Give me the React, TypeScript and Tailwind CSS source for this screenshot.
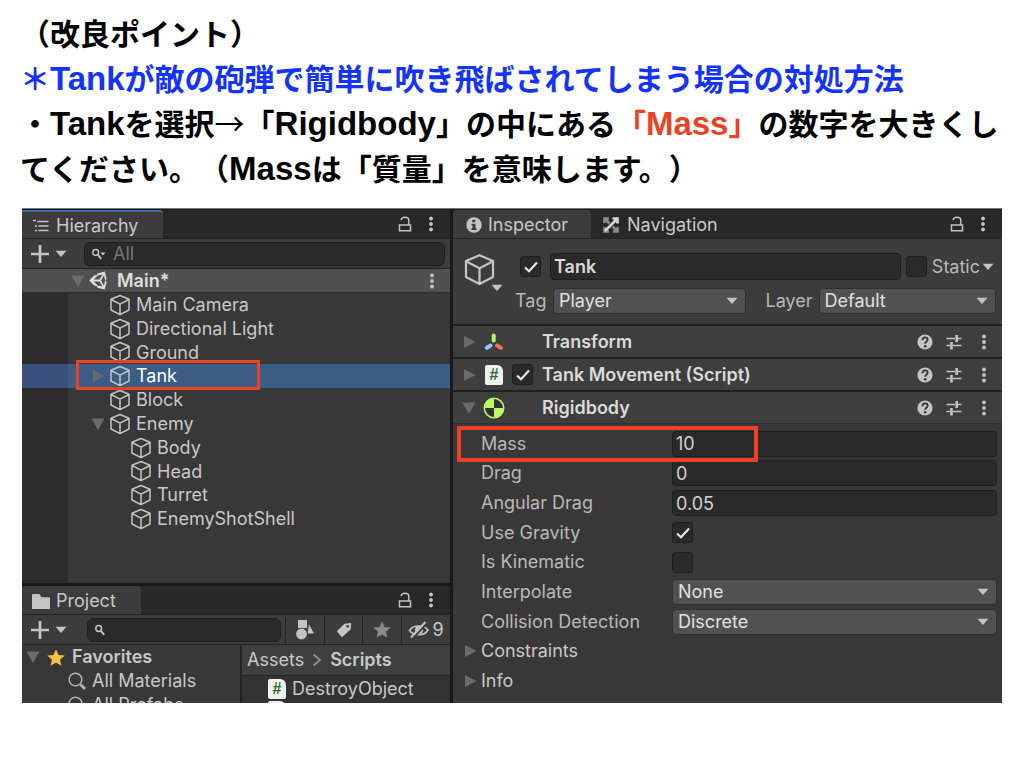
import React from "react";

type Dir = "right" | "down";

function Triangle({ dir }: { dir: Dir }) {
  return (
    <svg viewBox="0 0 14 14" className="size-3.5 shrink-0 fill-[#6b6b6b]" aria-hidden="true">
      <path d={dir === "down" ? "M0.5 1.5h13L7 13z" : "M2 1l11.500 6L2 13z"} />
    </svg>
  );
}

function Caret({ className = "" }: { className?: string }) {
  return (
    <svg viewBox="0 0 12 8" className={"h-2 w-3 shrink-0 fill-[#c4c4c4] " + className} aria-hidden="true">
      <path d="M0.500 0.800h11L6 7z" />
    </svg>
  );
}

function Cube({ className }: { className: string }) {
  return (
    <svg viewBox="0 0 22 22" className={"shrink-0 fill-none stroke-[#c4c4c4] " + className} strokeWidth="1.500" strokeLinejoin="round" aria-hidden="true">
      <path d="M11 1.500L20 5.300V16L11 20.700L2 16V5.300zM2 5.500L11 10.200L20 5.500M11 10.200V20.500" />
    </svg>
  );
}

function UnityLogo() {
  return (
    <svg viewBox="0 0 24 24" className="size-[19px] shrink-0 fill-[#dedede]" aria-hidden="true">
      <path
        fillRule="evenodd"
        d="M22.200 9.400L19.800 0.600L10.800 3L9.500 5.300H6.800L0.300 12L6.800 18.700H9.500L10.800 21L19.800 23.400L22.200 14.600L20.800 12zM18.900 5.500L20.400 12L18.900 18.500L15.300 12zM17 4.500L13.300 10.800H6L11 5.800zM17 19.500L13.300 13.200H6L11 18.200z"
      />
    </svg>
  );
}

function ListIcon() {
  return (
    <svg viewBox="0 0 18 14" className="h-3.5 w-[18px] shrink-0 fill-none stroke-[#c4c4c4]" strokeWidth="1.700" aria-hidden="true">
      <path d="M1 1.500h3M5.500 2.500h11M3 7h2M6.500 7h10M3 11.500h2M6.500 11.500h10" />
    </svg>
  );
}

function Lock() {
  return (
    <svg viewBox="0 0 14 16" className="h-4 w-3.5 fill-none stroke-[#c4c4c4]" strokeWidth="1.500" aria-hidden="true">
      <path d="M1.500 9h11v5.700h-11zM3.300 4.200C3.300 2 4.800 1.300 7 1.300c2.300 0 3.800 0.900 3.800 3V9" />
    </svg>
  );
}

function Dots() {
  return (
    <svg viewBox="0 0 6 16" className="h-4 w-1.5 fill-[#c4c4c4]" aria-hidden="true">
      <circle cx="3" cy="2.500" r="1.900" />
      <circle cx="3" cy="8" r="1.900" />
      <circle cx="3" cy="13.500" r="1.900" />
    </svg>
  );
}

function Plus() {
  return (
    <svg viewBox="0 0 18 18" className="size-[18px] fill-none stroke-[#c4c4c4]" strokeWidth="2.700" aria-hidden="true">
      <path d="M9 0v18M0 9h18" />
    </svg>
  );
}

function Folder() {
  return (
    <svg viewBox="0 0 18 15" className="h-[15px] w-[18px] shrink-0 fill-[#c4c4c4]" aria-hidden="true">
      <path d="M0 1q0-1 1-1h6q1 0 1.300 1l0.700 2.300h8q1 0 1 1V15H0z" />
    </svg>
  );
}

function SmallGlass({ menu = false }: { menu?: boolean }) {
  return (
    <svg viewBox="0 0 16 12" className="h-3 w-4 shrink-0 fill-none stroke-[#c4c4c4]" strokeWidth="1.500" aria-hidden="true">
      <circle cx="4.700" cy="4.500" r="2.900" />
      <path d="M6.800 6.800l3.500 4" strokeWidth="2" />
      {menu && <path d="M9.500 4.500h5L12 7.500z" className="fill-[#c4c4c4] stroke-none" />}
    </svg>
  );
}

function BigGlass() {
  return (
    <svg viewBox="0 0 18 18" className="size-[18px] shrink-0 fill-none stroke-[#b4b4b4]" strokeWidth="1.500" aria-hidden="true">
      <circle cx="7.500" cy="7.500" r="6.300" />
      <path d="M12.500 12.500l4.500 4.500" strokeWidth="2.800" />
    </svg>
  );
}

function Star({ className }: { className: string }) {
  return (
    <svg viewBox="0 0 18 17" className={"h-[17px] w-[18px] shrink-0 " + className} aria-hidden="true">
      <path d="M9 0.300l2.500 5.700 6.200 0.600-4.700 4.100 1.400 6L9 13.500l-5.400 3.200 1.400-6L0.300 6.600 6.500 6z" />
    </svg>
  );
}

function Shapes() {
  return (
    <svg viewBox="0 0 18 20" className="h-5 w-[18px] fill-[#c4c4c4]" aria-hidden="true">
      <path d="M2 0h9v8H2zM13 4.500l5 9h-6.500z" />
      <circle cx="5.500" cy="14" r="6.300" className="fill-[#3c3c3c]" />
      <circle cx="5.500" cy="14" r="5.400" />
    </svg>
  );
}

function Tag() {
  return (
    <svg viewBox="0 0 16 16" className="size-4 fill-[#c4c4c4]" aria-hidden="true">
      <path fillRule="evenodd" d="M8.500 1.800L14.300 1q1 0 0.900 1L14.500 7.500L6 15.300L0.800 9.300zM11.700 3a1.400 1.400 0 1 0 0.010 0z" />
    </svg>
  );
}

function HiddenEye() {
  return (
    <svg viewBox="0 0 22 18" className="h-[18px] w-[22px] fill-none stroke-[#c4c4c4]" strokeWidth="1.600" aria-hidden="true">
      <path d="M1.500 9.500C5 3.500 16 3.500 20 9C16.500 15 6 15.500 1.500 9.500z" />
      <circle cx="11" cy="9" r="4" className="fill-[#c4c4c4] stroke-none" />
      <path d="M5 17.500L19 2" stroke="#3c3c3c" strokeWidth="2" />
      <path d="M3 16.500L17.500 1" strokeWidth="2" />
    </svg>
  );
}

function InfoIcon() {
  return (
    <svg viewBox="0 0 16 16" className="size-4 shrink-0" aria-hidden="true">
      <circle cx="8" cy="8" r="7.700" fill="#c4c4c4" />
      <path d="M6.300 2.800h3v2.500h-3zM5.500 6.800h4v4.700h1.200v1.500H5.300v-1.500h1.200V8.300h-1z" fill="#383838" />
    </svg>
  );
}

function NavIcon() {
  return (
    <svg viewBox="0 0 16 16" className="size-4 shrink-0 fill-none" aria-hidden="true">
      <path d="M1.500 6V1.500H6M1.500 1.500l5 5M14.500 10v4.500H10M14.500 14.500l-5-5" stroke="#8c8c8c" strokeWidth="2.600" />
      <path d="M1.500 10v4.500H6" stroke="#8c8c8c" strokeWidth="2.600" />
      <path d="M9.500 1.500h5v5M14.500 1.500L2 14" stroke="#d8d8d8" strokeWidth="2.600" />
    </svg>
  );
}

function HelpIcon() {
  return (
    <svg viewBox="0 0 16 16" className="size-4" aria-hidden="true">
      <circle cx="8" cy="8" r="7.600" fill="#c4c4c4" />
      <path d="M5.500 6.300C5.500 4 6.700 3.400 8 3.400c1.500 0 2.600 0.900 2.600 2.300C10.600 7.500 8.200 7.500 8.200 9.800" fill="none" stroke="#383838" strokeWidth="1.900" />
      <circle cx="8.200" cy="12.200" r="1.300" fill="#383838" />
    </svg>
  );
}

function Sliders() {
  return (
    <svg viewBox="0 0 16 16" className="size-4 fill-none stroke-[#c4c4c4]" aria-hidden="true">
      <path d="M0.500 4.500H9M12 4.500h3.500M0.500 11.500H4M7 11.500h8.500" strokeWidth="1.600" />
      <path d="M10.700 1v7M5.500 8v7.500" strokeWidth="2.600" />
    </svg>
  );
}

function TransformIcon() {
  return (
    <svg viewBox="0 0 20 18" className="h-[18px] w-5" strokeLinecap="round" strokeWidth="4" aria-hidden="true">
      <path d="M9.700 2.500v5" stroke="#b9f26b" />
      <path d="M6.500 12.600L2.800 14.800" stroke="#86cdf7" />
      <path d="M13 12.600L17 14.800" stroke="#f2764f" />
    </svg>
  );
}

function RigidbodyIcon() {
  return (
    <svg viewBox="0 0 22 22" className="size-[22px]" aria-hidden="true">
      <circle cx="11" cy="11" r="9.700" fill="#333" stroke="#b9fb6b" strokeWidth="1.500" />
      <path d="M11 11V1.300A9.700 9.700 0 0 0 1.300 11zM11 11v9.700A9.700 9.700 0 0 0 20.700 11z" fill="#b9fb6b" />
    </svg>
  );
}

function ScriptIcon({ mark = "#" }: { mark?: string }) {
  return (
    <span className="flex h-5 w-[18px] shrink-0 items-center justify-center rounded-xs rounded-tr-md bg-[#f0f0f0] font-['Liberation_Sans'] text-base font-bold text-[#2f6b2c]">
      {mark}
    </span>
  );
}

function Check({ label, id, on = false }: { label?: string; id?: string; on?: boolean }) {
  return (
    <span className="grid size-[21px] shrink-0 place-items-center">
      <input
        type="checkbox"
        id={id}
        aria-label={label}
        defaultChecked={on}
        className="peer col-start-1 row-start-1 size-[21px] appearance-none rounded-[3px] border border-[#1f1f1f] bg-[#2a2a2a]"
      />
      <svg viewBox="0 0 14 12" className="pointer-events-none invisible col-start-1 row-start-1 h-3 w-3.5 fill-none stroke-[#e8e8e8] peer-checked:visible" strokeWidth="2.200" aria-hidden="true">
        <path d="M1 6.500L5 10.300L13 1.500" />
      </svg>
    </span>
  );
}

function Select({ id, value, className = "flex-1" }: { id: string; value: string; className?: string }) {
  return (
    <span className={"relative flex min-w-0 " + className}>
      <select id={id} defaultValue={value} className="h-[26px] w-full appearance-none rounded-[4px] border border-[#303030] bg-[#515151] pl-[5px] text-[#e0e0e0]">
        <option>{value}</option>
      </select>
      <Caret className="pointer-events-none absolute top-[9px] right-2" />
    </span>
  );
}

function TabBar({ children }: { children: React.ReactNode }) {
  return (
    <div className="flex h-[29px] shrink-0 border-b border-[#232323] bg-[#282828]">
      {children}
      <div className="ml-auto flex items-center gap-4 pr-4">
        <button aria-label="Lock"><Lock /></button>
        <button aria-label="Panel menu"><Dots /></button>
      </div>
    </div>
  );
}

type Node = { name: string; depth: 1 | 2; arrow?: Dir; selected?: boolean };

const nodes: Node[] = [
  { name: "Main Camera", depth: 1 },
  { name: "Directional Light", depth: 1 },
  { name: "Ground", depth: 1 },
  { name: "Tank", depth: 1, arrow: "right", selected: true },
  { name: "Block", depth: 1 },
  { name: "Enemy", depth: 1, arrow: "down" },
  { name: "Body", depth: 2 },
  { name: "Head", depth: 2 },
  { name: "Turret", depth: 2 },
  { name: "EnemyShotShell", depth: 2 },
];

function TreeRow({ node }: { node: Node }) {
  return (
    <li className={"relative flex " + (node.selected ? "z-10 bg-[#3a5c85] text-white" : "")}>
      <span className={"w-[46px] shrink-0 " + (node.selected ? "bg-[#3c5080]" : "bg-[#2d2d2d]")} />
      <span className={"flex items-center " + (node.depth === 1 ? "pl-[23px]" : "pl-[44px]")}>
        <span className="mr-1 flex w-3.5">{node.arrow && <Triangle dir={node.arrow} />}</span>
        <Cube className="mr-[5px] size-[22px]" />
        {node.name}
      </span>
      {node.selected && <span className="absolute -top-1 -bottom-0.5 left-[54px] w-[184px] border-3 border-[#ea4224]" />}
    </li>
  );
}

function Hierarchy() {
  return (
    <section className="bg-[#383838]">
      <TabBar>
        <div className="flex w-[141px] items-center gap-1.5 rounded-tr border-t-2 border-[#3a6ea5] bg-[#3c3c3c] pt-0.5 pl-2.5">
          <ListIcon />
          Hierarchy
        </div>
      </TabBar>
      <div className="flex h-[30px] items-center border-b border-[#232323] bg-[#3c3c3c] pr-[5px] pl-[9px]">
        <button aria-label="Create object" className="flex w-[53px] items-center gap-1.5">
          <Plus />
          <Caret />
        </button>
        <label className="flex h-6 flex-1 items-center gap-1.5 rounded-md border border-[#1f1f1f] bg-[#2a2a2a] pl-1.5">
          <SmallGlass menu />
          <input aria-label="Search hierarchy" placeholder="All" className="w-full bg-transparent outline-none placeholder:text-[#757575]" />
        </label>
      </div>
      <div className="flex h-6 items-center border-b border-[#2d2d2d] bg-[#505050] pr-[15px] pl-[49px] font-semibold text-[#dedede]">
        <Triangle dir="down" />
        <span className="mr-[9px] ml-1"><UnityLogo /></span>
        Main*
        <button aria-label="Scene menu" className="ml-auto"><Dots /></button>
      </div>
      <ul className="grid h-[238px] auto-rows-fr">
        {nodes.map((n) => (
          <TreeRow key={n.name} node={n} />
        ))}
      </ul>
      <div className="h-[52px] w-[46px] bg-[#2d2d2d]" />
    </section>
  );
}

function Project() {
  return (
    <section className="flex min-h-0 flex-1 flex-col border-t-3 border-[#191919] bg-[#383838]">
      <TabBar>
        <div className="flex w-[119px] items-center gap-1.5 rounded-t bg-[#3c3c3c] pt-0.5 pl-2.5">
          <Folder />
          Project
        </div>
      </TabBar>
      <div className="flex h-[30px] shrink-0 items-stretch border-b border-[#232323] bg-[#3c3c3c] pl-[9px]">
        <button aria-label="Create asset" className="flex w-14 items-center gap-1.5">
          <Plus />
          <Caret />
        </button>
        <label className="mr-1 flex h-6 flex-1 items-center self-center rounded-md border border-[#1f1f1f] bg-[#2a2a2a] pl-1.5">
          <SmallGlass />
          <input aria-label="Search project" className="w-full min-w-0 bg-transparent outline-none" />
        </label>
        <button aria-label="Filter by type" className="flex w-[39px] items-center justify-center border-l border-[#232323]"><Shapes /></button>
        <button aria-label="Filter by label" className="flex w-[38px] items-center justify-center border-l border-[#232323]"><Tag /></button>
        <button aria-label="Favorite" className="flex w-[39px] items-center justify-center border-l border-[#232323]"><Star className="fill-[#8a8a8a]" /></button>
        <button aria-label="Hidden packages" className="flex w-[49px] items-center justify-center gap-0.5 border-l border-[#232323]"><HiddenEye />9</button>
      </div>
      <div className="flex min-h-0 flex-1 overflow-hidden">
        <ul className="w-[220px] border-r-2 border-[#232323]">
          <li className="flex h-6 items-center pl-1 font-semibold">
            <Triangle dir="down" />
            <Star className="mx-[7px] fill-[#f5c245]" />
            Favorites
          </li>
          <li className="flex h-6 items-center gap-1.5 pl-[46px]"><BigGlass />All Materials</li>
          <li className="flex h-6 items-center gap-1.5 pl-[46px]"><BigGlass />All Prefabs</li>
        </ul>
        <div className="flex-1 bg-[#333]">
          <nav className="flex h-[31px] items-center gap-2 border-b border-[#232323] bg-[#3f3f3f] pl-[5px]">
            <a href="#assets">Assets</a>
            <svg viewBox="0 0 10 14" className="h-3.5 w-2.5 fill-none stroke-[#8a8a8a]" strokeWidth="2" aria-hidden="true"><path d="M1.500 1.500L8 7l-6.500 5.500" /></svg>
            <a href="#scripts" className="font-semibold">Scripts</a>
          </nav>
          <ul className="pt-px pl-[26px]">
            <li className="flex h-6 items-center gap-1.5"><ScriptIcon />DestroyObject</li>
            <li className="flex h-6 items-start"><ScriptIcon mark="" /></li>
          </ul>
        </div>
      </div>
    </section>
  );
}

function Component({ title, dir, icon, check }: { title: string; dir: Dir; icon: React.ReactNode; check?: boolean }) {
  return (
    <div className="flex h-[33px] items-center border-t-2 border-[#202020] bg-[#3e3e3e] pr-[15px] pl-[9px]">
      <Triangle dir={dir} />
      <span className="mx-[7px] flex w-[22px] justify-center">{icon}</span>
      <span className="mr-[9px] w-[21px]">{check && <Check on label={title + " enabled"} />}</span>
      <h2 className="font-semibold text-[#dadada]">{title}</h2>
      <span className="ml-auto flex items-center">
        <button aria-label={title + " help"} className="mr-[13px]"><HelpIcon /></button>
        <button aria-label={title + " presets"} className="mr-[19px]"><Sliders /></button>
        <button aria-label={title + " menu"}><Dots /></button>
      </span>
    </div>
  );
}

function Row({ id, label, marked = false, children }: { id: string; label: string; marked?: boolean; children: React.ReactNode }) {
  return (
    <div className={"flex items-center pr-[5px] pl-7 " + (marked ? "relative z-10" : "")}>
      <label htmlFor={id} className="w-[191px] shrink-0 text-[#b8b8b8]">{label}</label>
      {children}
      {marked && <span className="pointer-events-none absolute -top-[3px] -bottom-[3px] left-1 w-[301px] border-4 border-[#ea4224]" />}
    </div>
  );
}

function NumberField({ id, value }: { id: string; value: string }) {
  return <input id={id} defaultValue={value} className="h-[26px] min-w-0 flex-1 rounded-[4px] border border-[#1f1f1f] bg-[#2a2a2a] pl-[3px] text-[#d2d2d2]" />;
}

function Inspector() {
  return (
    <section className="bg-[#383838]">
      <TabBar>
        <div className="flex w-[138px] items-center gap-1.5 rounded-t bg-[#3c3c3c] pt-0.5 pl-[13px]">
          <InfoIcon />
          Inspector
        </div>
        <div className="flex items-center gap-2 pt-0.5 pl-3">
          <NavIcon />
          Navigation
        </div>
      </TabBar>
      <div className="flex h-[85px] gap-1 bg-[#3c3c3c] pt-3.5 pr-1.5 pl-2.5">
        <button aria-label="Object icon" className="flex w-10 flex-col self-start">
          <Cube className="size-[33px]" />
          <Caret className="-mt-0.5 self-end" />
        </button>
        <div className="flex flex-1 flex-col gap-2 pl-1">
          <div className="flex items-center pr-0.5 pl-[9px]">
            <Check on label="Object active" />
            <input aria-label="Object name" defaultValue="Tank" className="mr-[5px] ml-[9px] h-[27px] min-w-0 flex-1 rounded-[4px] border border-[#1f1f1f] bg-[#2a2a2a] pl-[3px] font-semibold text-[#dadada]" />
            <Check id="static" />
            <label htmlFor="static" className="mr-0.5 ml-[5px] text-[#b8b8b8]">Static</label>
            <Caret />
          </div>
          <div className="flex items-center pl-1">
            <label htmlFor="tag" className="w-[38px] text-[#b8b8b8]">Tag</label>
            <Select id="tag" value="Player" className="flex-[192]" />
            <label htmlFor="layer" className="ml-5 w-[53px] text-[#b8b8b8]">Layer</label>
            <Select id="layer" value="Default" className="flex-[177]" />
          </div>
        </div>
      </div>
      <Component title="Transform" dir="right" icon={<TransformIcon />} />
      <Component title="Tank Movement (Script)" dir="right" icon={<ScriptIcon />} check />
      <Component title="Rigidbody" dir="down" icon={<RigidbodyIcon />} />
      <div className="grid h-[273px] auto-rows-fr border-t border-[#303030] pt-[5px]">
        <Row id="mass" label="Mass" marked><NumberField id="mass" value="10" /></Row>
        <Row id="drag" label="Drag"><NumberField id="drag" value="0" /></Row>
        <Row id="angular" label="Angular Drag"><NumberField id="angular" value="0.05" /></Row>
        <Row id="gravity" label="Use Gravity"><Check id="gravity" on /></Row>
        <Row id="kinematic" label="Is Kinematic"><Check id="kinematic" /></Row>
        <Row id="interpolate" label="Interpolate"><Select id="interpolate" value="None" /></Row>
        <Row id="collision" label="Collision Detection"><Select id="collision" value="Discrete" /></Row>
        <button className="flex items-center gap-1 pl-2.5"><Triangle dir="right" />Constraints</button>
        <button className="flex items-center gap-1 pl-2.5"><Triangle dir="right" />Info</button>
      </div>
    </section>
  );
}

function En({ children }: { children: string }) {
  return <span className="font-['Liberation_Sans',sans-serif] text-[33px] leading-none">{children}</span>;
}

export default function App() {
  return (
    <main className="min-h-screen bg-white">
      <header className="px-5 pt-2.5 pb-[18px] font-['Noto_Sans_CJK_JP',sans-serif] text-3xl leading-[45px] font-bold text-black [text-spacing-trim:space-all]" lang="ja">
        <h1>（改良ポイント）</h1>
        <p className="text-[#1433ff]">＊<En>Tank</En>が敵の砲弾で簡単に吹き飛ばされてしまう場合の対処方法</p>
        <p>
          ・<En>Tank</En>を選択<span className="font-normal">→</span>「<En>Rigidbody</En>」の中にある
          <span className="text-[#ea4224]">「<En>Mass</En>」</span>の数字を大きくしてください。（<En>Mass</En>は「質量」を意味します。）
        </p>
      </header>
      <div className="mx-[22px] grid grid-cols-[428fr_549fr] gap-[3px] border-t border-[#777] bg-[#191919] font-['Inter',sans-serif] text-lg leading-6 text-[#c8c8c8]">
        <div className="flex h-[494px] min-w-0 flex-col pt-px">
          <Hierarchy />
          <Project />
        </div>
        <div className="flex min-w-0 flex-col bg-[#383838]">
          <div className="h-px bg-[#191919]" />
          <Inspector />
        </div>
      </div>
    </main>
  );
}
